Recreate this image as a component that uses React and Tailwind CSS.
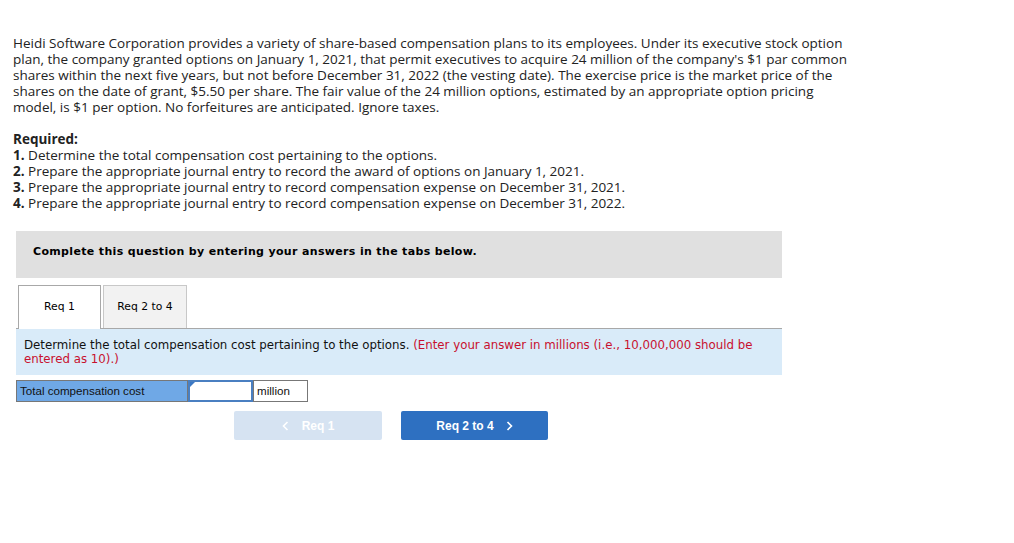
import React from 'react'

const body = { fontFamily: '"Open Sans", "Liberation Sans", Arial, sans-serif' }
const verdana = { fontFamily: '"DejaVu Sans", Verdana, sans-serif' }
const arial = { fontFamily: '"Liberation Sans", Arial, sans-serif' }

const Chevron = ({ dir }) => (
  <svg width="7" height="10" viewBox="0 0 7 10" fill="none" stroke="currentColor" strokeWidth="1.6">
    {dir === 'left' ? <path d="M5.5 1 L1.5 5 L5.5 9" /> : <path d="M1.5 1 L5.5 5 L1.5 9" />}
  </svg>
)

function App() {
  return (
    <div className="w-[1014px] h-[543px] bg-white text-black overflow-hidden">
      <div className="pl-[13px] pt-[35px] text-[13.5px] leading-[16px] text-[#222]" style={body}>
        <p>
          Heidi Software Corporation provides a variety of share-based compensation plans to its employees. Under its executive stock option<br />
          plan, the company granted options on January 1, 2021, that permit executives to acquire 24 million of the company's $1 par common<br />
          shares within the next five years, but not before December 31, 2022 (the vesting date). The exercise price is the market price of the<br />
          shares on the date of grant, $5.50 per share. The fair value of the 24 million options, estimated by an appropriate option pricing<br />
          model, is $1 per option. No forfeitures are anticipated. Ignore taxes.
        </p>
        <p className="mt-[16px] font-bold">Required:</p>
        <p><b>1.</b> Determine the total compensation cost pertaining to the options.</p>
        <p><b>2.</b> Prepare the appropriate journal entry to record the award of options on January 1, 2021.</p>
        <p><b>3.</b> Prepare the appropriate journal entry to record compensation expense on December 31, 2021.</p>
        <p><b>4.</b> Prepare the appropriate journal entry to record compensation expense on December 31, 2022.</p>
      </div>

      <div className="ml-[16px] w-[766px] mt-[20px]">
        <div className="h-[47px] bg-[#e0e0e0] flex items-center pb-[5px] pl-[17px] text-[11px] tracking-[0.34px] font-bold text-black" style={verdana}>
          Complete this question by entering your answers in the tabs below.
        </div>

        <div className="mt-[7px] flex items-end border-b border-[#a8a8a8] pl-[2px]" style={verdana}>
          <div className="w-[83px] h-[44px] bg-white border border-b-0 border-[#a8a8a8] flex items-center justify-center text-[10.8px] -mb-px relative z-10">
            Req 1
          </div>
          <div className="ml-[2px] w-[84px] h-[43px] bg-[#f2f2f2] border border-b-0 border-[#c8c8c8] flex items-center justify-center text-[10.8px]">
            Req 2 to 4
          </div>
        </div>

        <div className="bg-[#d9ebf9] h-[46px] px-[8px] pt-[9px] text-[11.8px] leading-[14px] text-[#111]" style={verdana}>
          Determine the total compensation cost pertaining to the options. <span className="text-[#c8102e]">(Enter your answer in millions (i.e., 10,000,000 should be<br />entered as 10).)</span>
        </div>

        <div className="mt-[5px] flex h-[22px] text-[11.6px]" style={arial}>
          <div className="w-[172px] bg-[#6fa8e6] border border-[#777] flex items-center pl-[3px] text-[#111]">
            Total compensation cost
          </div>
          <div className="relative w-[65px] bg-white border-2 border-[#4a7fc1]">
            <div className="absolute left-0 top-0 w-0 h-0 border-t-[5px] border-t-[#3b78c4] border-r-[5px] border-r-transparent" />
          </div>
          <div className="w-[55px] bg-white border border-[#777] flex items-center pl-[3px] text-[#111]">
            million
          </div>
        </div>

        <div className="mt-[9px] flex" style={arial}>
          <button className="ml-[218px] w-[148px] h-[29px] rounded-[2px] bg-[#d6e3f2] text-white text-[12px] font-bold flex items-center justify-center gap-[13px]">
            <Chevron dir="left" /> <span>Req 1</span>
          </button>
          <button className="ml-[19px] w-[147px] h-[29px] rounded-[2px] bg-[#2e70c1] text-white text-[12px] font-bold flex items-center justify-center gap-[12px]">
            <span>Req 2 to 4</span> <Chevron dir="right" />
          </button>
        </div>
      </div>
    </div>
  )
}

export default App
